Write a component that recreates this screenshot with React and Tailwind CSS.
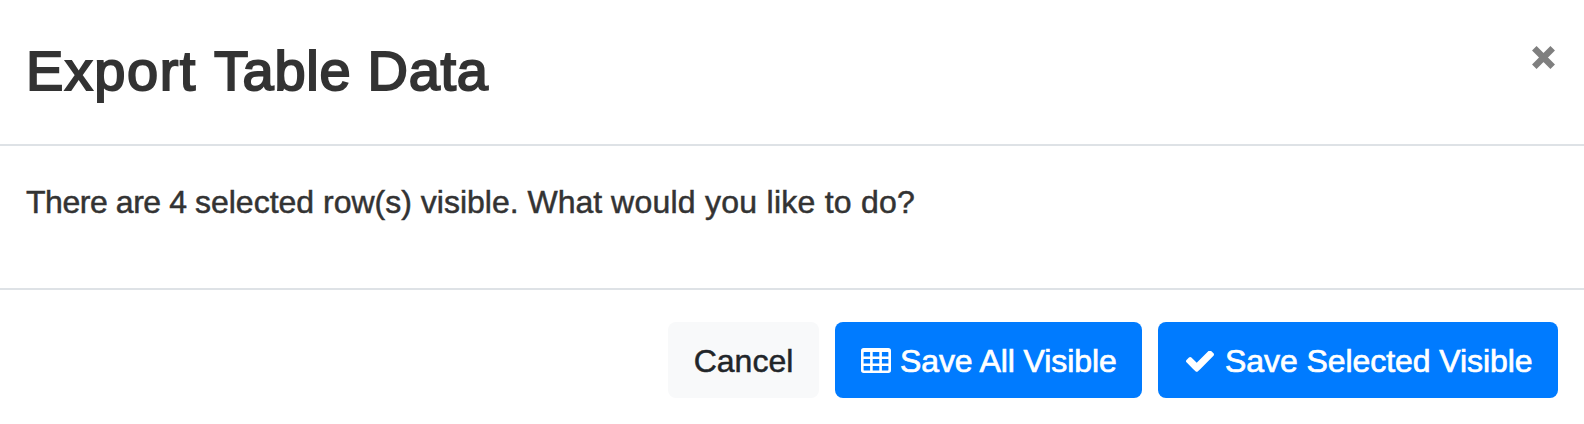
function TableIcon() {
  return (
    <svg viewBox="0 0 30 25" className="h-[25px] w-[30px] shrink-0" fill="currentColor">
      <path
        fillRule="evenodd"
        d="M2.7 0H27.3A2.7 2.7 0 0 1 30 2.7V22.3A2.7 2.7 0 0 1 27.3 25H2.7A2.7 2.7 0 0 1 0 22.3V2.7A2.7 2.7 0 0 1 2.7 0ZM3 4.1Q2.6 4.1 2.6 4.5V8.5H9.1V4.1ZM11.7 4.1V8.5H18.3V4.1ZM20.9 4.1V8.5H27.4V4.5Q27.4 4.1 27 4.1ZM2.6 11V15.5H9.1V11ZM11.7 11V15.5H18.3V11ZM20.9 11V15.5H27.4V11ZM2.6 18V22Q2.6 22.4 3 22.4H9.1V18ZM11.7 18V22.4H18.3V18ZM20.9 18V22.4H27Q27.4 22.4 27.4 22V18Z"
      />
    </svg>
  );
}

function CheckIcon() {
  return (
    <svg viewBox="121 374 1550 1148" className="mt-[3px] h-[21px] w-[28px] shrink-0" fill="currentColor">
      <path d="M1671 566q0 40-28 68l-724 724-136 136q-28 28-68 28t-68-28l-136-136-362-362q-28-28-28-68t28-68l136-136q28-28 68-28t68 28l294 295 656-657q28-28 68-28t68 28l136 136q28 28 28 68z" />
    </svg>
  );
}

export default function App() {
  return (
    <div className="flex h-[424px] w-[1584px] flex-col bg-white font-['Liberation_Sans',Arial,sans-serif] text-[#212529]">
      <header className="flex h-[146px] items-start justify-between border-b-2 border-[#dee2e6] pr-[28px] pl-[26px]">
        <h1 className="pt-[37px] text-[56px] leading-[67px] font-medium text-[#333] [-webkit-text-stroke:2px_#333]">
          <span className="tracking-[1.5px]">Export </span>
          <span className="tracking-[0.7px]">Table Data</span>
        </h1>
        <button aria-label="Close" className="mt-[46px]">
          <svg viewBox="0 0 24 23" className="h-[23px] w-6" fill="none" stroke="#7f7f7f" strokeWidth="6.4">
            <path d="M2.3 2.3L20.7 20.7M20.7 2.3L2.3 20.7" />
          </svg>
        </button>
      </header>
      <main className="h-[144px] border-b-2 border-[#dee2e6] pt-8 pl-[26px]">
        <p className="text-[32px] leading-[48px] text-[#333] [-webkit-text-stroke:0.5px_#333]">
          <span className="tracking-[-0.45px]">There are 4 </span>
          <span>selected row(s) visible. What </span>
          <span className="tracking-[0.25px]">would you like to do?</span>
        </p>
      </main>
      <footer className="flex justify-end gap-4 pt-8 pr-[26px] text-[32px] leading-[48px]">
        <button className="flex h-[76px] w-[151px] items-center justify-center rounded-lg bg-[#f8f9fa]">
          <span className="pt-0.5 [-webkit-text-stroke:0.5px_#212529]">Cancel</span>
        </button>
        <button className="flex h-[76px] w-[307px] items-center gap-[9px] rounded-lg bg-[#007bff] pl-[26px] whitespace-nowrap text-white">
          <TableIcon />
          <span className="pt-0.5 tracking-[-0.1px] [-webkit-text-stroke:0.7px_white]">Save All Visible</span>
        </button>
        <button className="flex h-[76px] w-[400px] items-center gap-[11px] rounded-lg bg-[#007bff] pl-[28px] whitespace-nowrap text-white">
          <CheckIcon />
          <span className="pt-0.5 tracking-[-0.07px] [-webkit-text-stroke:0.7px_white]">Save Selected Visible</span>
        </button>
      </footer>
    </div>
  );
}
